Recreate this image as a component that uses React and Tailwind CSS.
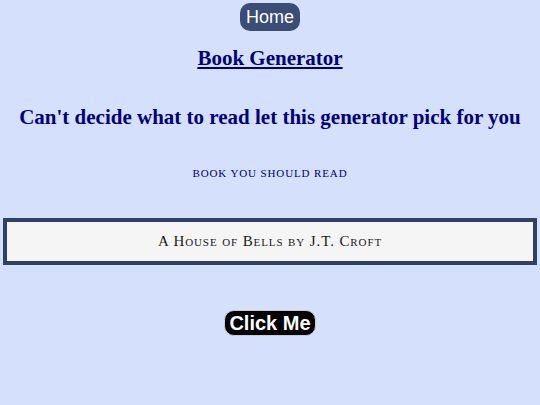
export default function App() {
  return (
    <div className="min-h-[405px] bg-[#d5e0fc] text-[#000080] flex flex-col items-center" style={{ fontFamily: '"Liberation Serif", serif' }}>
      {/* Home */}
      <button className="mt-[3px] h-[28px] px-[6px] rounded-[10px] bg-[#3a4d76] text-white text-[18px] leading-none" style={{ fontFamily: '"Liberation Sans", sans-serif' }}>
        Home
      </button>

      <a href="#" className="mt-[17px] text-[21px] font-bold underline leading-none">Book Generator</a>

      <h1 className="mt-[38px] text-[21px] font-bold leading-none">Can't decide what to read let this generator pick for you</h1>

      <p className="mt-[40px] text-[11px] tracking-[0.08em] leading-none">BOOK YOU SHOULD READ</p>

      {/* Result box */}
      <div className="mt-[39px] w-[534px] h-[47px] border-[4px] border-[#2f4167] bg-[#f5f5f5] flex items-center justify-center">
        <span className="text-[15px] text-[#1a1a1a] tracking-[0.06em]" style={{ fontVariant: "small-caps" }}>A House of Bells by J.T. Croft</span>
      </div>

      <button className="mt-[45px] h-[26px] px-[4px] rounded-[10px] bg-black text-white text-[20px] font-bold leading-none border border-[#ccc]" style={{ fontFamily: '"Liberation Sans", sans-serif' }}>
        Click Me
      </button>
    </div>
  );
}
